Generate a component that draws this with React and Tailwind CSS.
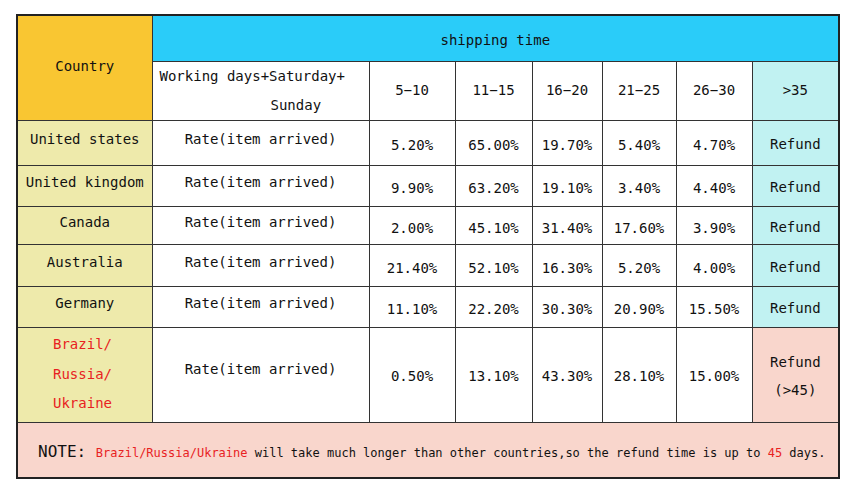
import React from 'react';

const MONO = { fontFamily: '"DejaVu Sans Mono", "Liberation Mono", monospace' };

const COLS = ['w-[135px]', 'w-[217px]', 'w-[86px]', 'w-[77px]', 'w-[70px]', 'w-[74px]', 'w-[76px]', 'w-[87px]'];

const ROWS = [
    { country: 'United states', h: 'h-[45px]', values: ['5.20%', '65.00%', '19.70%', '5.40%', '4.70%'] },
    { country: 'United kingdom', h: 'h-[41px]', values: ['9.90%', '63.20%', '19.10%', '3.40%', '4.40%'] },
    { country: 'Canada', h: 'h-[38px]', values: ['2.00%', '45.10%', '31.40%', '17.60%', '3.90%'] },
    { country: 'Australia', h: 'h-[42px]', values: ['21.40%', '52.10%', '16.30%', '5.20%', '4.00%'] },
    { country: 'Germany', h: 'h-[41px]', values: ['11.10%', '22.20%', '30.30%', '20.90%', '15.50%'] },
];

const cell = 'border border-[#333] text-center align-middle p-0';

const App = () => {
    return (
        <div className="w-[850px] h-[500px] bg-white pl-[16px] pt-[14px] text-[14px] text-[#111]" style={MONO}>
            <table className="table-fixed w-[822px] border-collapse border-2 border-[#222]">
                <colgroup>
                    {COLS.map((w, i) => <col key={i} className={w} />)}
                </colgroup>
                <tbody>
                    {/* Header */}
                    <tr className="h-[46px]">
                        <td rowSpan={2} className={`${cell} bg-[#F9C632] pb-[2px]`}>Country</td>
                        <td colSpan={7} className={`${cell} bg-[#2ACCF9] pt-[4px]`}>shipping time</td>
                    </tr>
                    <tr className="h-[57px]">
                        <td className={`${cell} bg-white text-left leading-[29px]`}>
                            <div className="pl-[7px]">Working days+Saturday+</div>
                            <div className="pl-[118px]">Sunday</div>
                        </td>
                        {['5-10', '11-15', '16-20', '21-25', '26-30'].map((t) => (
                            <td key={t} className={`${cell} bg-white`}>{t.replace('-', '−')}</td>
                        ))}
                        <td className={`${cell} bg-[#C1F2F2]`}>&gt;35</td>
                    </tr>

                    {/* Rows */}
                    {ROWS.map((r) => (
                        <tr key={r.country} className={r.h}>
                            <td className={`${cell} bg-[#EEEAAB] pb-[6px]`}>{r.country}</td>
                            <td className={`${cell} bg-white pb-[6px]`}>Rate(item arrived)</td>
                            {r.values.map((v, i) => (
                                <td key={i} className={`${cell} bg-white pt-[6px]`}>{v}</td>
                            ))}
                            <td className={`${cell} bg-[#C1F2F2] pt-[4px]`}>Refund</td>
                        </tr>
                    ))}

                    <tr className="h-[95px]">
                        <td className={`${cell} bg-[#EEEAAB] text-left text-[#E8221F] leading-[29.5px] pl-[35px]`}>
                            <div>Brazil/</div>
                            <div>Russia/</div>
                            <div>Ukraine</div>
                        </td>
                        <td className={`${cell} bg-white pb-[10px]`}>Rate(item arrived)</td>
                        {['0.50%', '13.10%', '43.30%', '28.10%', '15.00%'].map((v, i) => (
                            <td key={i} className={`${cell} bg-white pt-[4px]`}>{v}</td>
                        ))}
                        <td className={`${cell} bg-[#F9D6CC] leading-[28px] pt-[2px]`}>
                            <div>Refund</div>
                            <div>(&gt;45)</div>
                        </td>
                    </tr>

                    {/* Note */}
                    <tr className="h-[56px]">
                        <td colSpan={8} className={`${cell} bg-[#F9D6CC] text-left pl-[20px] pt-[4px] text-[12px]`}>
                            <span className="text-[16px]">NOTE: </span>
                            <span className="text-[#E8221F]">Brazil/Russia/Ukraine</span>
                            {' will take much longer than other countries,so the refund time is up to '}
                            <span className="text-[#E8221F]">45</span>
                            {' days.'}
                        </td>
                    </tr>
                </tbody>
            </table>
        </div>
    );
};

export default App;
